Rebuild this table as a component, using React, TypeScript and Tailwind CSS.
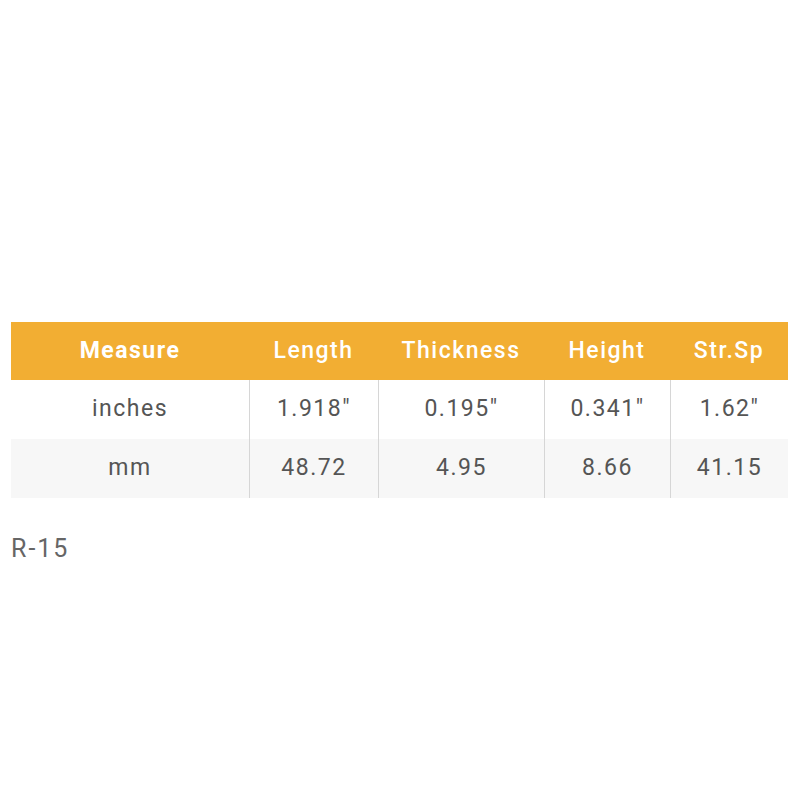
const header = ["Measure", "Length", "Thickness", "Height", "Str.Sp"];

const rows = [
  ["inches", "1.918″", "0.195″", "0.341″", "1.62″"],
  ["mm", "48.72", "4.95", "8.66", "41.15"],
];

export default function App() {
  return (
    <div className="w-[800px] h-[800px] bg-white font-['Roboto',sans-serif] pt-[322px] px-[11px]">
      {/* spec table */}
      <div className="w-[777px] tracking-[1.5px] text-[23px]">
        <div className="grid grid-cols-[238px_129px_166px_126px_118px] h-[58px] bg-[#f2ae33] text-white">
          {header.map((h, i) => (
            <div
              key={h}
              className={`flex items-center justify-center ${i === 0 ? "font-bold" : "font-medium"}`}
            >
              {h}
            </div>
          ))}
        </div>
        {rows.map((r, ri) => (
          <div
            key={ri}
            className={`grid grid-cols-[238px_129px_166px_126px_118px] h-[59px] text-[#555] ${ri === 1 ? "bg-[#f7f7f7]" : "bg-white"}`}
          >
            {r.map((c, ci) => (
              <div
                key={ci}
                className={`flex items-center justify-center ${ci > 0 ? "border-l border-[#d6d6d6]" : ""}`}
              >
                {c}
              </div>
            ))}
          </div>
        ))}
      </div>
      <p className="mt-[38px] text-[25px] tracking-[2px] text-[#666] leading-none">R-15</p>
    </div>
  );
}
